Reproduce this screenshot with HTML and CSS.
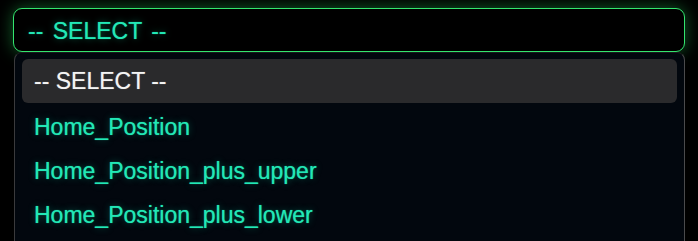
FILE: index.html
```html
<!DOCTYPE html>
<html>
<head>
<meta charset="utf-8">
<link rel="stylesheet" href="styles.css">
</head>
<body>
<div class="wrap">
  <div class="select">-- SELECT --</div>
  <div class="menu">
    <div class="opt selected">-- SELECT --</div>
    <div class="opt">Home_Position</div>
    <div class="opt">Home_Position_plus_upper</div>
    <div class="opt">Home_Position_plus_lower</div>
  </div>
</div>
</body>
</html>
```
FILE: styles.css
```css
html, body {
  margin: 0;
  padding: 0;
  background: #000;
  width: 698px;
  height: 241px;
  overflow: hidden;
}
.wrap {
  padding: 8px 13px 0 13px;
  font-family: "Liberation Sans", Arial, sans-serif;
  font-size: 23px;
}
.select {
  box-sizing: border-box;
  height: 44px;
  border: 1.5px solid #33e56e;
  border-radius: 9px;
  background: #000;
  color: #22e8b6;
  padding: 2px 0 0 14px;
  display: flex;
  align-items: center;
  word-spacing: 3px;
  box-shadow: 0 0 16px rgba(40, 210, 90, 0.45);
  text-shadow: 0 0 1px rgba(34, 232, 182, 0.7), 0 0 7px rgba(20, 200, 150, 0.45);
}
.menu {
  margin: 0 0 0 1px;
  background: #02070e;
  border-left: 1px solid #3a3a3c;
  border-right: 1px solid #4a4a4c;
  border-top: 1px solid #1a1a1c;
  border-radius: 8px 8px 0 0;
  padding: 6px 7px 0 7px;
  height: 200px;
  box-sizing: border-box;
}
.opt {
  height: 44px;
  display: flex;
  align-items: center;
  padding-left: 12px;
  color: #22e8b6;
  text-shadow: 0 0 1px rgba(34, 232, 182, 0.7), 0 0 7px rgba(20, 200, 150, 0.4);
  border-radius: 6px;
}
.opt.selected {
  background: #2a2a2c;
  color: #f4f4f4;
  text-shadow: 0 0 1px rgba(255, 255, 255, 0.5);
  margin-bottom: 2px;
}
```
